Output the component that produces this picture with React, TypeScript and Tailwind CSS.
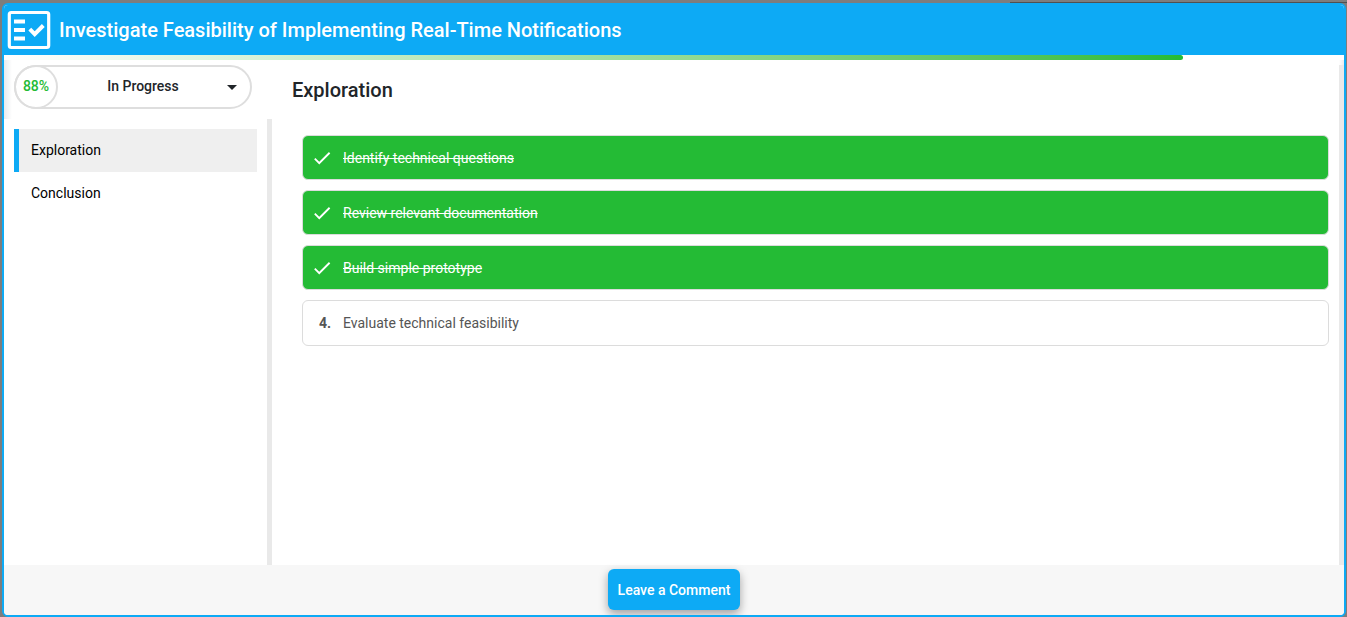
import React from "react";
import { MdCheck, MdArrowDropDown } from "react-icons/md";

const progress = 88;

const sections = [
  { name: "Exploration", active: true },
  { name: "Conclusion", active: false },
];

const tasks = [
  { label: "Identify technical questions", done: true },
  { label: "Review relevant documentation", done: true },
  { label: "Build simple prototype", done: true },
  { label: "Evaluate technical feasibility", done: false },
];

function ChecklistIcon() {
  return (
    <svg viewBox="0 0 50 50" className="size-[50px] shrink-0" fill="none" aria-hidden="true">
      <rect x="5.3" y="7.5" width="39.4" height="35" rx="2" stroke="currentColor" strokeWidth="3.2" />
      <path d="M10 16.5h11M10 25h11M10 33.5h11" stroke="currentColor" strokeWidth="4" />
      <path d="M25.8 24.2l4.9 4.9 8.6-8.6" stroke="currentColor" strokeWidth="4" />
    </svg>
  );
}

function Header() {
  return (
    <header className="flex h-[50px] shrink-0 items-center gap-[5px] bg-[#0daaf5] text-white">
      <ChecklistIcon />
      <h1 className="text-xl font-medium">
        Investigate Feasibility of Implementing Real-Time Notifications
      </h1>
    </header>
  );
}

function StatusPicker() {
  return (
    <button
      type="button"
      className="flex h-11 w-full items-center rounded-full border-2 border-[#dedede] bg-white text-sm font-medium text-[#212529]"
    >
      <span className="-ml-0.5 flex size-11 shrink-0 items-center justify-center rounded-full border-2 border-[#dedede] pb-0.5 text-[#24bb35]">
        {progress}%
      </span>
      <span className="grow pb-0.5 pl-2 text-center">In Progress</span>
      <MdArrowDropDown size={24} className="mr-1.5 shrink-0" aria-hidden="true" />
    </button>
  );
}

function Sidebar() {
  return (
    <aside className="flex w-[268px] shrink-0 flex-col">
      <div className="h-[59px] shrink-0 bg-linear-to-r from-[#e9ebed] to-white to-[8px] pt-[5px] pr-5 pl-2.5">
        <StatusPicker />
      </div>
      <nav className="grow border-r-[5px] border-[#e9e9e9] px-2.5 pt-2.5">
        {sections.map((s) => (
          <a
            key={s.name}
            href={"#" + s.name.toLowerCase()}
            aria-current={s.active ? "page" : undefined}
            className={
              s.active
                ? "flex h-[43px] items-center border-l-[5px] border-[#0daaf5] bg-[#efefef] pb-0.5 pl-3 text-sm text-black"
                : "flex h-[43px] items-center border-l-[5px] border-transparent pb-0.5 pl-3 text-sm text-black"
            }
          >
            {s.name}
          </a>
        ))}
      </nav>
    </aside>
  );
}

function TaskList() {
  return (
    <ol className="flex flex-col gap-2.5 px-2.5 pt-[30px]">
      {tasks.map((t, i) => (
        <li key={t.label}>
          <button
            type="button"
            className={
              t.done
                ? "flex h-[45px] w-full items-center rounded-md border border-[#dcdcdc] bg-[#24bb35] pl-2 text-sm text-white"
                : "flex h-[46px] w-full items-center rounded-md border border-[#dcdcdc] bg-white pl-2 text-sm text-[#555555]"
            }
          >
            <span className="flex w-8 shrink-0 items-center">
              {t.done ? (
                <MdCheck size={22} aria-label="Done" />
              ) : (
                <span className="pl-2 font-bold">{i + 1}.</span>
              )}
            </span>
            <span className={t.done ? "line-through" : ""}>{t.label}</span>
          </button>
        </li>
      ))}
    </ol>
  );
}

export default function App() {
  return (
    <div className="flex h-screen flex-col bg-[#7d7d7d] font-['Roboto',sans-serif]">
      <div className="flex h-[3px] shrink-0 items-end justify-end">
        <div className="h-px w-1/4 bg-[#505050]" />
      </div>
      <div
        role="dialog"
        aria-label="Task checklist"
        className="mr-px ml-0.5 flex min-h-0 grow flex-col overflow-hidden rounded-md border-2 border-[#0daaf5] bg-white"
      >
        <Header />
        <div className="h-[5px] shrink-0 bg-white">
          <div
            className="h-full rounded-r-full bg-linear-to-r from-white to-[#24bb35]"
            style={{ width: progress + "%" }}
          />
        </div>
        <div className="flex min-h-0 grow">
          <Sidebar />
          <div className="flex min-w-0 grow flex-col">
            <div className="h-[5px] shrink-0 bg-linear-to-l from-[#e9ebed] to-white to-[5px]" />
            <main className="grow border-r-[5px] border-[#e9e9e9] pt-2.5 pl-5">
              <h2 className="text-xl leading-[30px] font-medium text-[#212529]">Exploration</h2>
              <TaskList />
            </main>
          </div>
        </div>
        <footer className="flex h-[50px] shrink-0 items-start justify-center bg-[#f7f7f7] pt-1">
          <button
            type="button"
            className="h-[41px] rounded-md bg-[#0daaf5] px-2.5 text-sm font-medium text-white shadow-[0_4px_10px_rgba(0,0,0,0.35)]"
          >
            Leave a Comment
          </button>
        </footer>
      </div>
    </div>
  );
}
